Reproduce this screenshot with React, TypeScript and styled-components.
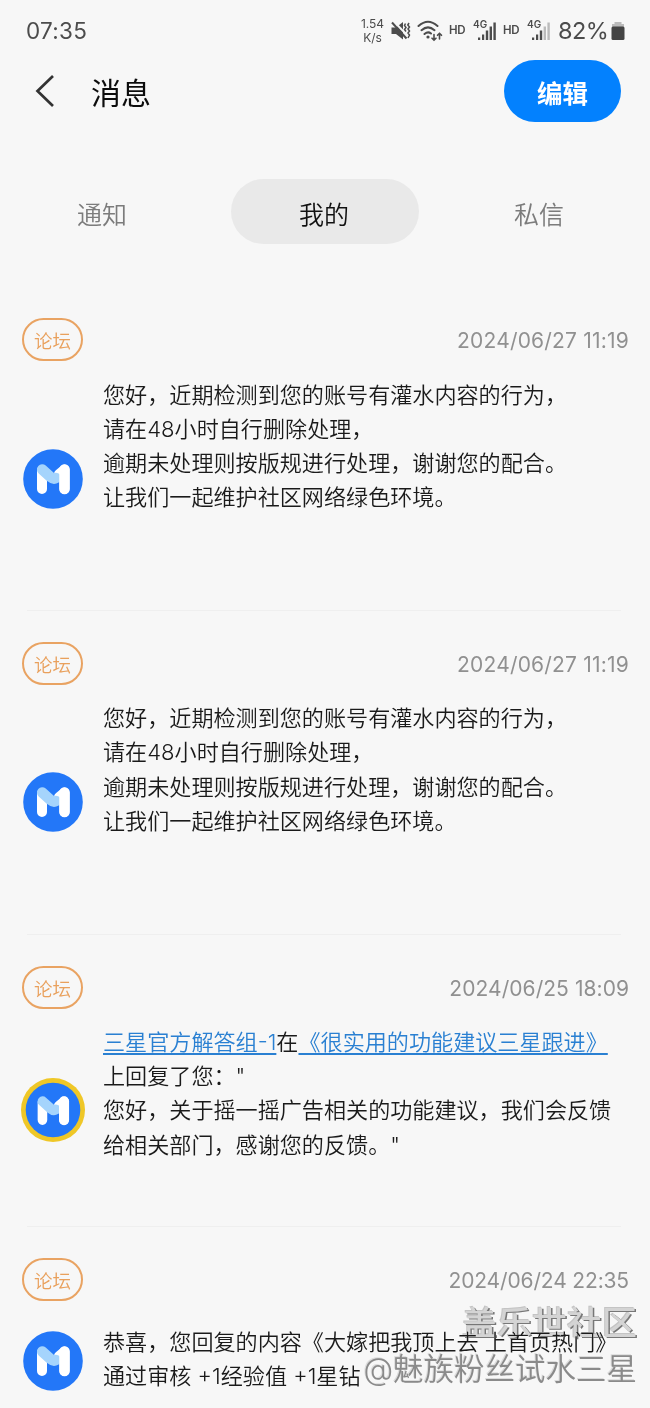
import React from "react";
import styled, { createGlobalStyle } from "styled-components";

const Global = createGlobalStyle`
  * { box-sizing: border-box; }
  body {
    margin: 0;
    background: #f7f7f7;
    font-family: Inter, "Noto Sans CJK SC", sans-serif;
    font-weight: 350;
    color: #1a1a1a;
  }
`;

const Screen = styled.main`
  position: relative;
  width: 650px;
  height: 1408px;
  overflow: hidden;
  background: #f7f7f7;
`;

const StatusBar = styled.div`
  display: flex;
  justify-content: space-between;
  align-items: center;
  height: 60px;
  padding: 1px 25px 0 26px;
  color: #4c4c4c;
`;

const Clock = styled.span`
  font-size: 22.5px;
  font-weight: 400;
  letter-spacing: 0.3px;
`;

const StatusRight = styled.div`
  display: flex;
  align-items: center;
`;

const Speed = styled.div`
  width: 25px;
  font-size: 12px;
  line-height: 13.5px;
  font-weight: 400;
  text-align: center;
  margin-right: 6px;
`;

const Hd = styled.span<{ $gap: number }>`
  width: 17px;
  padding-bottom: 2px;
  font-size: 11.5px;
  font-weight: 600;
  letter-spacing: -0.2px;
  margin-right: ${(p) => p.$gap}px;
`;

const Percent = styled.span`
  font-size: 23.5px;
  font-weight: 400;
  width: 50px;
  letter-spacing: -0.6px;
  margin-right: 3px;
  white-space: nowrap;
`;

const Icon = styled.svg<{ $gap?: number }>`
  display: block;
  flex: none;
  margin-right: ${(p) => p.$gap ?? 0}px;
`;

const TitleBar = styled.header`
  display: flex;
  align-items: center;
  height: 62px;
  padding: 0 29px 0 34px;
`;

const Title = styled.h1`
  flex: 1;
  margin: 4px 0 0 36px;
  font-size: 30px;
  line-height: 40px;
  font-weight: 400;
  color: #0c0c0c;
`;

const EditButton = styled.button`
  width: 117px;
  height: 62px;
  padding: 0;
  border: 0;
  border-radius: 31px;
  background: #0381fe;
  color: #fff;
  font: 700 25.5px Inter, "Noto Sans CJK SC", sans-serif;
`;

const Tabs = styled.nav`
  display: flex;
  margin: 57px 0 0 8px;
`;

const Tab = styled.div<{ $active?: boolean }>`
  display: flex;
  align-items: center;
  justify-content: center;
  flex: none;
  width: 188px;
  height: 65px;
  margin-right: ${(p) => (p.$active ? 26 : 35)}px;
  padding: 2px ${(p) => (p.$active ? 2 : 0)}px 0 0;
  border-radius: 33px;
  font-size: 25px;
  background: ${(p) => (p.$active ? "#e9e9e9" : "transparent")};
  color: ${(p) => (p.$active ? "#111" : "#7c7c7c")};
`;

const List = styled.section`
  margin-top: 43px;
`;

const Item = styled.article<{ $height: number }>`
  height: ${(p) => p.$height}px;
  margin: 0 21px 0 22px;
  padding-top: 31px;
`;

const Divider = styled.hr`
  height: 1px;
  margin: -1px 29px 0 27px;
  border: 0;
  background: #efefef;
`;

const ItemHead = styled.div`
  display: flex;
  justify-content: space-between;
  align-items: center;
  height: 43px;
`;

const Tag = styled.span`
  width: 61px;
  height: 43px;
  padding-top: 2px;
  border: 2px solid #e9a362;
  border-radius: 22px;
  color: #e9a05c;
  font-size: 18.5px;
  line-height: 39px;
  text-align: center;
`;

const Time = styled.time<{ $spacing: number }>`
  padding-top: 2px;
  font-size: 21px;
  font-weight: 400;
  letter-spacing: ${(p) => p.$spacing}px;
  color: #909090;
  white-space: nowrap;
`;

const ItemBody = styled.div`
  display: flex;
  align-items: flex-start;
`;

const AvatarSlot = styled.div<{ $top: number }>`
  display: flex;
  justify-content: center;
  flex: none;
  width: 62px;
  margin: ${(p) => p.$top}px 19px 0 0;
`;

const Message = styled.div<{ $top: number }>`
  margin-top: ${(p) => p.$top}px;
  font-size: 22.1px;
  line-height: 34.3px;
  white-space: nowrap;
`;

const Line = styled.div``;

const Link = styled.a`
  color: #2a80d2;
  text-decoration: underline;
  text-decoration-thickness: 2px;
  text-underline-offset: 3px;
`;

const Watermark = styled.div`
  position: absolute;
  right: 13px;
  top: 1299px;
  text-align: right;
  white-space: nowrap;
  mix-blend-mode: darken;
`;

const Community = styled.div`
  font-size: 35px;
  line-height: 46px;
  font-weight: 500;
  color: #d4d4d4;
  text-shadow: 1.5px 1.5px 0 #777, -1px -1px 0 #c4c4c4;
  transform: translateY(1px) scaleY(0.93);
`;

const Author = styled.div`
  font-size: 30.5px;
  line-height: 46px;
  font-weight: 350;
  color: #8a8a8a;
  text-shadow: -1px -1px 0 #dcdcdc;
  transform: translateY(1px);
`;

const Avatar = ({ ring = false }: { ring?: boolean }) => {
  const size = ring ? 66 : 60;
  return (
    <Icon width={size} height={size} viewBox={ring ? "-33 -33 66 66" : "-30 -30 60 60"}>
      {ring && <circle r="32" fill="#efc727" />}
      <circle r={ring ? 27.3 : 29.8} fill="#2377f8" />
      <g transform={ring ? "translate(0 .5) scale(.96)" : undefined} strokeLinecap="round" strokeLinejoin="round" fill="none" strokeWidth="10">
        <path d="M-11 -8.5V10M11.5 -9.5V10M11.5 -9.5L6 -5" stroke="#fff" />
        <path d="M-10.8 -9.5L-2.5 -2Q0.5 0.5 3 -1" stroke="#a5d4fc" strokeWidth="10.5" />
        <path d="M11.5 -9.5V10" stroke="#fff" strokeWidth="10.5" />
      </g>
    </Icon>
  );
};

const Signal = ({ weak = false }: { weak?: boolean }) => (
  <Icon width="24" height="24" viewBox="0 0 24 24" $gap={weak ? 7 : 6}>
    <text x="0" y="9" fontSize="10" fontWeight="600" fill="#4c4c4c">4G</text>
    <g fill="#4c4c4c">
      <rect x="5" y="18.5" width="2.2" height="2.5" />
      <rect x="9" y="15.5" width="2.2" height="5.5" />
      <rect x="12.8" y="11.5" width="2.4" height="9.5" />
      <rect x="16.6" y="7.5" width="2.4" height="13.5" fill={weak ? "#bbb" : "#4c4c4c"} />
      <rect x="20.4" y="3.5" width="2.4" height="17.5" fill={weak ? "#bbb" : "#4c4c4c"} />
    </g>
  </Icon>
);

interface Notice {
  time: string;
  timeSpacing: number;
  height: number;
  avatarTop: number;
  textTop: number;
  ring?: boolean;
  lines: React.ReactNode[];
}

const warning = [
  "您好，近期检测到您的账号有灌水内容的行为，",
  "请在48小时自行删除处理，",
  "逾期未处理则按版规进行处理，谢谢您的配合。",
  "让我们一起维护社区网络绿色环境。",
];

const notices: Notice[] = [
  { time: "2024/06/27 11:19", timeSpacing: 0.2, height: 324, avatarTop: 88, textTop: 16.6, lines: warning },
  { time: "2024/06/27 11:19", timeSpacing: 0.2, height: 323.5, avatarTop: 87, textTop: 16, lines: warning },
  {
    time: "2024/06/25 18:09",
    timeSpacing: 0.05,
    height: 292,
    avatarTop: 68.5,
    textTop: 16.2,
    ring: true,
    lines: [
      <><Link>三星官方解答组-1</Link>在<Link>《很实用的功能建议三星跟进》</Link></>,
      '上回复了您："',
      "您好，关于摇一摇广告相关的功能建议，我们会反馈",
      '给相关部门，感谢您的反馈。"',
    ],
  },
  {
    time: "2024/06/24 22:35",
    timeSpacing: -0.15,
    height: 200,
    avatarTop: 30.5,
    textTop: 24.5,
    lines: ["恭喜，您回复的内容《大嫁把我顶上去 上首页热门》", "通过审核 +1经验值 +1星钻"],
  },
];

export default function App() {
  return (
    <Screen>
      <Global />
      <StatusBar>
        <Clock>07:35</Clock>
        <StatusRight>
          <Speed>1.54<br />K/s</Speed>
          <Icon width="20" height="20" viewBox="0 0 20 20" $gap={6}>
            <path d="M0.5 6.5H5L12 1V18.5L5 13H0.5Z" fill="#4c4c4c" />
            <path d="M3 0.5L13 11" stroke="#f7f7f7" strokeWidth="2" />
            <path d="M1 1.5L15.5 17.5" stroke="#4c4c4c" strokeWidth="2" />
            <path d="M14.5 2.5L13.5 4.5L15 6.5L13.5 8.5L15 10.5M18 2L16.8 4L18.5 6L17 8L18.5 10L17 12L18.5 14L17 17" stroke="#4c4c4c" strokeWidth="1.5" fill="none" />
          </Icon>
          <Icon width="26" height="22" viewBox="0 0 26 22" $gap={6}>
            <g fill="none" stroke="#4c4c4c" strokeWidth="2" strokeLinecap="round">
              <path d="M1.5 6Q11 -2.5 20.5 6M4.5 10.2Q11 4.5 17.5 10.2M7.5 14Q11 11 14 13.5" />
              <path d="M17 14.5V20M15 18.2L17 20.2L19 18.2M22.5 19V13.5M20.5 15.3L22.5 13.3L24.5 15.3" strokeWidth="1.6" />
            </g>
            <circle cx="11" cy="17" r="1.6" fill="#4c4c4c" />
          </Icon>
          <Hd $gap={7}>HD</Hd>
          <Signal />
          <Hd $gap={7}>HD</Hd>
          <Signal weak />
          <Percent>82%</Percent>
          <Icon width="14" height="20" viewBox="0 0 14 20">
            <path d="M3.5 1H10.5V3H13V6H1V3H3.5Z" fill="#bbb" />
            <rect x="0.5" y="5.5" width="13" height="13.5" rx="1.5" fill="#444" />
          </Icon>
        </StatusRight>
      </StatusBar>
      <TitleBar>
        <Icon width="21" height="34" viewBox="0 0 21 34">
          <path d="M19 2L3.5 17L19 32" fill="none" stroke="#333" strokeWidth="2.7" />
        </Icon>
        <Title>消息</Title>
        <EditButton>编辑</EditButton>
      </TitleBar>
      <Tabs>
        <Tab>通知</Tab>
        <Tab $active>我的</Tab>
        <Tab>私信</Tab>
      </Tabs>
      <List>
        {notices.map((n, i) => (
          <React.Fragment key={i}>
            {i > 0 && <Divider />}
            <Item $height={n.height}>
              <ItemHead>
                <Tag>论坛</Tag>
                <Time $spacing={n.timeSpacing}>{n.time}</Time>
              </ItemHead>
              <ItemBody>
                <AvatarSlot $top={n.avatarTop}><Avatar ring={n.ring} /></AvatarSlot>
                <Message $top={n.textTop}>
                  {n.lines.map((line, j) => <Line key={j}>{line}</Line>)}
                </Message>
              </ItemBody>
            </Item>
          </React.Fragment>
        ))}
      </List>
      <Watermark>
        <Community>盖乐世社区</Community>
        <Author>@魅族粉丝试水三星</Author>
      </Watermark>
    </Screen>
  );
}
